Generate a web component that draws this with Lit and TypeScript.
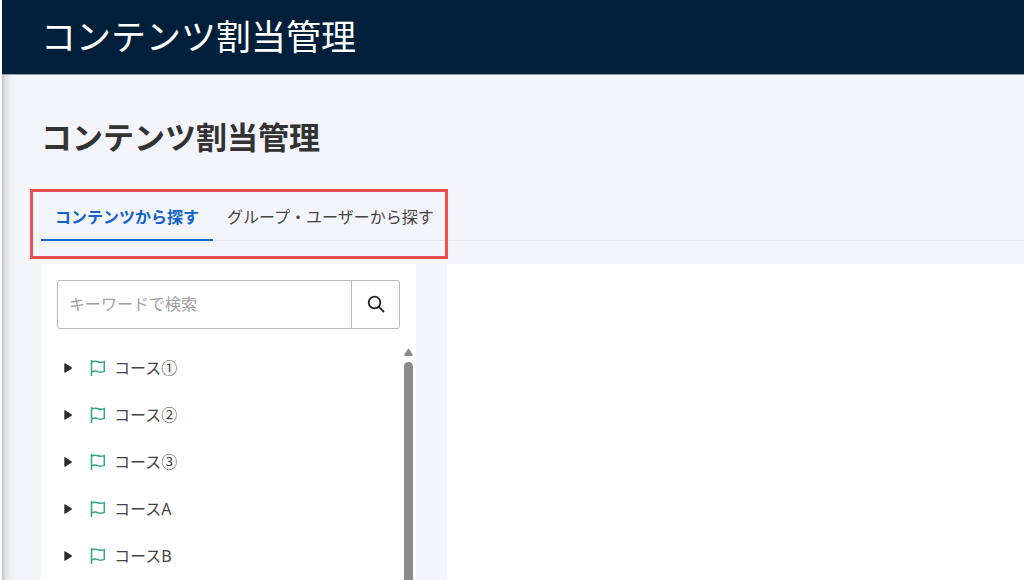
import { LitElement, html, css } from "lit";
import { customElement, property, state } from "lit/decorators.js";
import { classMap } from "lit/directives/class-map.js";

@customElement("course-row")
class CourseRow extends LitElement {
  @property() name = "";

  static styles = css`
    :host {
      display: block;
    }
    .row {
      display: flex;
      align-items: center;
      width: 100%;
      height: 47px;
      padding: 0 8px;
      border: 0;
      background: none;
      color: #444;
      font: inherit;
      text-align: left;
      cursor: pointer;
    }
    .arrow {
      width: 8px;
      height: 10px;
      margin-right: 18px;
      fill: #2b2e31;
    }
    .flag {
      width: 16px;
      height: 16px;
      margin-right: 8px;
      fill: none;
      stroke: #2fa587;
      stroke-width: 1.5;
    }
  `;

  render() {
    return html`
      <button class="row" type="button">
        <svg class="arrow" viewBox="0 0 8 10"><path d="M.3.800Q.3-.2 1.100.3L7.500 4.300Q8.200 5 7.500 5.700L1.100 9.700Q.3 10.200.3 9.200z" /></svg>
        <svg class="flag" viewBox="0 0 16 16">
          <path d="M1.500 0V16M1.500 2C4 .8 5.800 1 8 1.800C10 2.600 12 2.400 14.300 1.600V11.400C12 12.400 10 12.400 8 11.600C5.800 10.800 4 10.800 1.500 12" />
        </svg>
        <span>${this.name}</span>
      </button>
    `;
  }
}

@customElement("app-root")
class AppRoot extends LitElement {
  @state() private active = 0;

  private tabs = ["コンテンツから探す", "グループ・ユーザーから探す"];
  private courses = ["コース①", "コース②", "コース③", "コースA", "コースB"];

  static styles = css`
    :host {
      display: block;
      height: 100vh;
      overflow: hidden;
      padding-left: 2px;
      box-sizing: border-box;
      background: #fff;
      color: #333;
      font: 16px/24px "Noto Sans", "Noto Sans CJK JP", sans-serif;
    }
    * {
      box-sizing: border-box;
    }
    .page {
      display: flex;
      flex-direction: column;
      height: 100%;
      background: linear-gradient(90deg, #c4c5cb 0, #dfe0e6 3px, #eeeff4 8px, #f4f5fa 14px);
    }
    .bar {
      flex: none;
      display: flex;
      align-items: center;
      height: 75px;
      padding: 0 39px;
      background: #001f3b;
      border-bottom: 1px solid #8f9fb2;
      color: #fff;
      font-size: 35px;
      font-weight: 400;
      line-height: 48px;
    }
    main {
      flex: 1;
      min-height: 0;
      display: flex;
      flex-direction: column;
      padding: 38px 0 0 39px;
    }
    h1 {
      margin: 0 0 36px;
      font-size: 31px;
      line-height: 48px;
      font-weight: 700;
    }
    .tabs {
      flex: none;
      position: relative;
      display: flex;
      height: 44px;
      border-bottom: 1px solid #e0e6ea;
      margin-bottom: 23px;
    }
    .tab {
      height: 44px;
      padding: 0 14px 2px;
      border: 0;
      border-bottom: 2px solid transparent;
      background: none;
      color: #444;
      font: inherit;
      cursor: pointer;
    }
    .tab.active {
      color: #0f62d0;
      border-color: #1768cc;
      font-weight: 700;
    }
    .highlight {
      position: absolute;
      left: -11px;
      top: -8px;
      width: 418px;
      height: 70px;
      border: 3px solid #ee5052;
      pointer-events: none;
    }
    .columns {
      flex: 1;
      min-height: 0;
      display: grid;
      grid-template-columns: 375px 1fr;
      gap: 31px;
    }
    .panel {
      min-height: 0;
      display: flex;
      flex-direction: column;
      background: #fff;
    }
    .search {
      flex: none;
      display: flex;
      height: 49px;
      margin: 16px 16px 15px;
      border: 1px solid #b9b9b9;
      border-radius: 3px;
    }
    .search input {
      flex: 1;
      min-width: 0;
      padding: 0 11px 1px;
      border: 0;
      outline: 0;
      background: none;
      color: #333;
      font: inherit;
    }
    .search input::placeholder {
      color: #a0a0a0;
      opacity: 1;
    }
    .search button {
      display: grid;
      place-items: center;
      width: 48px;
      padding: 0 0 2px;
      border: 0;
      border-left: 1px solid #b9b9b9;
      background: none;
    }
    .search svg {
      width: 18px;
      height: 18px;
      fill: none;
      stroke: #222;
      stroke-width: 1.8;
    }
    .tree {
      flex: 1;
      min-height: 0;
      display: flex;
    }
    .list {
      flex: 1;
      margin: 0;
      padding: 0 0 0 15px;
      list-style: none;
      overflow: hidden;
    }
    .scroll {
      display: flex;
      flex-direction: column;
      align-items: center;
      width: 9px;
      margin-right: 3px;
      padding-top: 4px;
      overflow: hidden;
    }
    .scroll svg {
      flex: none;
      width: 9px;
      height: 8px;
      fill: #8b8b8b;
    }
    .thumb {
      width: 9px;
      flex: 1;
      margin-top: 6px;
      border-radius: 5px 5px 0 0;
      background: #8b8b8b;
    }
  `;

  render() {
    return html`
      <div class="page">
        <header class="bar">コンテンツ割当管理</header>
        <main>
          <h1>コンテンツ割当管理</h1>
          <div class="tabs" role="tablist">
            ${this.tabs.map(
              (label, i) => html`<button
                type="button"
                role="tab"
                aria-selected=${i === this.active}
                class=${classMap({ tab: true, active: i === this.active })}
                @click=${() => (this.active = i)}
              >${label}</button>`
            )}
            <div class="highlight"></div>
          </div>
          <div class="columns">
            <section class="panel">
              <form class="search" @submit=${(e: Event) => e.preventDefault()}>
                <input type="text" aria-label="キーワードで検索" placeholder="キーワードで検索" />
                <button type="submit" aria-label="検索">
                  <svg viewBox="0 0 18 18"><circle cx="7.500" cy="7.500" r="5.800" /><path d="M11.700 11.700L17 17" /></svg>
                </button>
              </form>
              <div class="tree">
                <ul class="list">
                  ${this.courses.map((c) => html`<li><course-row .name=${c}></course-row></li>`)}
                </ul>
                <div class="scroll" aria-hidden="true">
                  <svg viewBox="0 0 9 8"><path d="M3.800 1Q4.500 0 5.200 1L8.800 7Q9 8 8 8H1Q0 8 .2 7z" /></svg>
                  <div class="thumb"></div>
                </div>
              </div>
            </section>
            <section class="panel"></section>
          </div>
        </main>
      </div>
    `;
  }
}
